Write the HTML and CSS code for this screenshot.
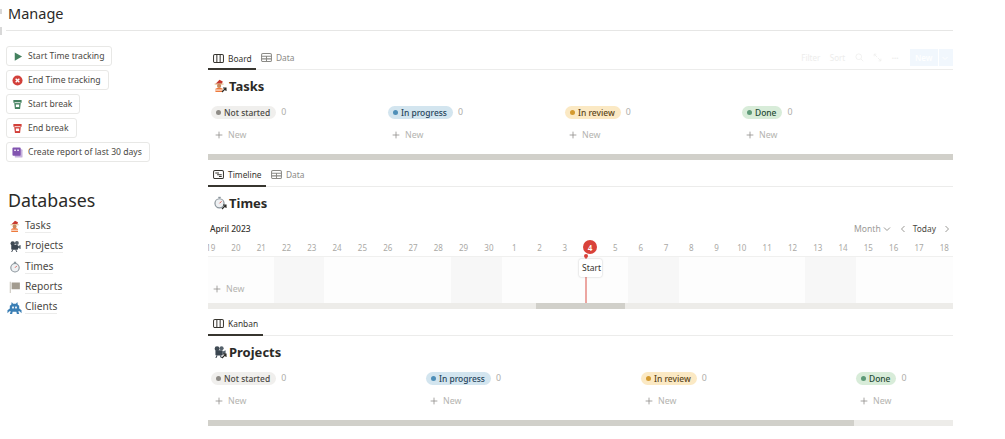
FILE: index.html
```html
<!DOCTYPE html>
<html lang="en">
<head>
    <meta charset="UTF-8">
    <meta name="viewport" content="width=device-width, initial-scale=1.0">
    <title>Manage</title>
    <link rel="stylesheet" href="styles.css">
</head>
<body>
    <!-- shared icons -->
    <svg class="defs" width="0" height="0">
        <symbol id="i-tasks" viewBox="0 0 16 16">
            <path d="M3 6 L8 1 L12 3 L11 6 Z" fill="#c8382e"/>
            <rect x="2" y="5.5" width="11" height="1.6" fill="#e8c9a0"/>
            <circle cx="7.5" cy="8.5" r="2.6" fill="#c98a5e"/>
            <path d="M3 16 L3 12 Q7.5 9.5 12 12 L12 16 Z" fill="#ee7a3c"/>
            <rect x="3" y="13" width="9" height="1.2" fill="#fff"/>
        </symbol>
        <symbol id="i-projects" viewBox="0 0 16 16">
            <circle cx="5" cy="4.5" r="3" fill="#3f4a54"/>
            <circle cx="10.5" cy="4" r="2.6" fill="#55616b"/>
            <rect x="3" y="6.5" width="9" height="6.5" rx="1" fill="#3a4550"/>
            <path d="M12 8 L15.5 6.5 L15.5 12 L12 10.5 Z" fill="#55616b"/>
            <path d="M5 13 L3.5 16 M9 13 L10.5 16" stroke="#3a4550" stroke-width="1.3"/>
        </symbol>
        <symbol id="i-times" viewBox="0 0 16 16">
            <rect x="6.5" y="1" width="3" height="1.6" fill="#8a949b"/>
            <circle cx="8" cy="9" r="5.6" fill="#eef1f3" stroke="#8a949b" stroke-width="1.5"/>
            <path d="M8 9 L10.5 6.5" stroke="#d8574c" stroke-width="1.2"/>
        </symbol>
        <symbol id="i-reports" viewBox="0 0 16 16">
            <rect x="1" y="1" width="1.4" height="15" fill="#c9c5bc"/>
            <rect x="3.5" y="2" width="11" height="9" fill="#a39c90"/>
        </symbol>
        <symbol id="i-clients" viewBox="0 0 16 16">
            <path d="M5 2 L6.5 4 L9.5 4 L11 2 L11.5 5 L13 6 L13 9 L15.5 11 L15.5 14 L13.5 12 L12 12 L13 15 L10.5 15 L10 12.5 L6 12.5 L5.5 15 L3 15 L4 12 L2.5 12 L.5 14 L.5 11 L3 9 L3 6 L4.5 5 Z" fill="#3b7fb5"/>
            <rect x="5.5" y="7" width="1.8" height="2" fill="#fff"/>
            <rect x="8.7" y="7" width="1.8" height="2" fill="#fff"/>
        </symbol>
        <symbol id="i-board" viewBox="0 0 12 12">
            <rect x=".6" y="1.6" width="10.8" height="8.8" rx="1.5" fill="none" stroke="currentColor" stroke-width="1.1"/>
            <path d="M4.2 1.6 V10.4 M7.8 1.6 V10.4" stroke="currentColor" stroke-width="1.1"/>
        </symbol>
        <symbol id="i-table" viewBox="0 0 12 12">
            <rect x=".6" y="1.6" width="10.8" height="8.8" rx="1.5" fill="none" stroke="currentColor" stroke-width="1.1"/>
            <path d="M.6 4.6 H11.4 M.6 7.5 H11.4 M6 4.6 V10.4" stroke="currentColor" stroke-width="1.1"/>
        </symbol>
        <symbol id="i-timeline" viewBox="0 0 12 12">
            <rect x=".6" y="1.6" width="10.8" height="8.8" rx="1.5" fill="none" stroke="currentColor" stroke-width="1.1"/>
            <path d="M2.5 4.3 H6.5 M4.5 6.2 H9.5 M6.5 8.1 H9.5" stroke="currentColor" stroke-width="1.1"/>
        </symbol>
        <symbol id="i-plus" viewBox="0 0 10 10">
            <path d="M5 .8 V9.2 M.8 5 H9.2" stroke="currentColor" stroke-width="1"/>
        </symbol>
        <symbol id="i-cup" viewBox="0 0 12 12">
            <path d="M1.5 1 H10.5 V4 H9.6 L8.8 11 H3.2 L2.4 4 H1.5 Z" fill="currentColor"/>
            <rect x="2.8" y="3.6" width="6.4" height=".9" fill="#fff"/>
            <rect x="4.2" y="6" width="3.6" height="2.8" fill="#fff"/>
        </symbol>
        <symbol id="i-arrow" viewBox="0 0 6 6">
            <path d="M1 5 L5 1 M2 1 H5 V4" fill="none" stroke="#2b2a27" stroke-width="1.1"/>
        </symbol>
    </svg>

    <div class="page">
        <span class="grip grip-top"></span>
        <span class="grip grip-bottom"></span>
        <h1 class="page-title">Manage</h1>

        <div class="columns">
            <aside class="sidebar">
                <div class="actions">
                    <button class="action">
                        <svg class="action-icon" viewBox="0 0 12 12"><path d="M3 1.5 L11 6 L3 10.5 Z" fill="#44815f"/></svg>
                        Start Time tracking
                    </button>
                    <button class="action">
                        <svg class="action-icon" viewBox="0 0 12 12"><circle cx="6" cy="6" r="5.5" fill="#d2403a"/><path d="M4 4 L8 8 M8 4 L4 8" stroke="#fff" stroke-width="1.5"/></svg>
                        End Time tracking
                    </button>
                    <button class="action">
                        <svg class="action-icon icon-green"><use href="#i-cup"/></svg>
                        Start break
                    </button>
                    <button class="action">
                        <svg class="action-icon icon-red"><use href="#i-cup"/></svg>
                        End break
                    </button>
                    <button class="action">
                        <svg class="action-icon" viewBox="0 0 12 12"><rect x="3" y="2.5" width="8.5" height="9" rx="1" fill="#c7b3de"/><rect x=".5" y=".5" width="9" height="9" rx="1" fill="#8254b0"/><rect x="2.5" y="2.8" width="1.6" height="1.6" fill="#fff"/><rect x="5.8" y="2.8" width="1.6" height="1.6" fill="#fff"/></svg>
                        Create report of last 30 days
                    </button>
                </div>

                <h2 class="db-title">Databases</h2>
                <ul class="db-list">
                    <li><svg class="db-icon"><use href="#i-tasks"/></svg><span>Tasks</span></li>
                    <li><svg class="db-icon"><use href="#i-projects"/></svg><span>Projects</span></li>
                    <li><svg class="db-icon"><use href="#i-times"/></svg><span>Times</span></li>
                    <li><svg class="db-icon"><use href="#i-reports"/></svg><span>Reports</span></li>
                    <li><svg class="db-icon db-icon-wide"><use href="#i-clients"/></svg><span>Clients</span></li>
                </ul>
            </aside>

            <main class="main">
                <!-- Tasks board -->
                <section class="view view-tasks">
                    <div class="tabs">
                        <div class="tab active board-tab"><svg class="tab-icon"><use href="#i-board"/></svg>Board</div>
                        <div class="tab"><svg class="tab-icon"><use href="#i-table"/></svg>Data</div>
                        <div class="toolbar">
                            <span>Filter</span>
                            <span>Sort</span>
                            <svg class="tool-icon" viewBox="0 0 12 12"><circle cx="5" cy="5" r="3.8" fill="none" stroke="currentColor"/><path d="M8 8 L11 11" stroke="currentColor"/></svg>
                            <svg class="tool-icon" viewBox="0 0 12 12"><path d="M1.5 1.5 L5.5 5.5 M1.5 1.5 H4.5 M1.5 1.5 V4.5 M6.5 6.5 L10.5 10.5 M10.5 10.5 H7.5 M10.5 10.5 V7.5" fill="none" stroke="currentColor"/></svg>
                            <span class="dots">&middot;&middot;&middot;</span>
                            <div class="new-btn">New<i class="new-divider"></i><svg class="new-chev" viewBox="0 0 8 8"><path d="M1.5 3 L4 5.5 L6.5 3" fill="none" stroke="white"/></svg></div>
                        </div>
                    </div>
                    <h3 class="view-title"><span class="linked"><svg class="title-icon"><use href="#i-tasks"/></svg><svg class="link-arrow"><use href="#i-arrow"/></svg></span>Tasks</h3>
                    <div class="board">
                        <div class="board-col">
                            <div class="col-head"><span class="pill grey">Not started</span><span class="count">0</span></div>
                            <div class="add"><svg class="plus"><use href="#i-plus"/></svg>New</div>
                        </div>
                        <div class="board-col">
                            <div class="col-head"><span class="pill blue">In progress</span><span class="count">0</span></div>
                            <div class="add"><svg class="plus"><use href="#i-plus"/></svg>New</div>
                        </div>
                        <div class="board-col">
                            <div class="col-head"><span class="pill yellow">In review</span><span class="count">0</span></div>
                            <div class="add"><svg class="plus"><use href="#i-plus"/></svg>New</div>
                        </div>
                        <div class="board-col">
                            <div class="col-head"><span class="pill green">Done</span><span class="count">0</span></div>
                            <div class="add"><svg class="plus"><use href="#i-plus"/></svg>New</div>
                        </div>
                    </div>
                    <div class="scrollbar"><div class="thumb thumb-full"></div></div>
                </section>

                <!-- Times timeline -->
                <section class="view view-times">
                    <div class="tabs">
                        <div class="tab active timeline-tab"><svg class="tab-icon"><use href="#i-timeline"/></svg>Timeline</div>
                        <div class="tab"><svg class="tab-icon"><use href="#i-table"/></svg>Data</div>
                    </div>
                    <h3 class="view-title"><span class="linked"><svg class="title-icon"><use href="#i-times"/></svg><svg class="link-arrow"><use href="#i-arrow"/></svg></span>Times</h3>
                    <div class="month-row">
                        <span class="month">April 2023</span>
                        <div class="month-tools">
                            <span class="month-select">Month <svg class="chev" viewBox="0 0 8 8"><path d="M1 2.5 L4 5.5 L7 2.5" fill="none" stroke="currentColor"/></svg></span>
                            <svg class="chev nav-prev" viewBox="0 0 8 8"><path d="M5.5 1 L2.5 4 L5.5 7" fill="none" stroke="currentColor"/></svg>
                            <span class="today">Today</span>
                            <svg class="chev nav-next" viewBox="0 0 8 8"><path d="M2.5 1 L5.5 4 L2.5 7" fill="none" stroke="currentColor"/></svg>
                        </div>
                    </div>
                    <div class="timeline">
                        <div class="days">
                            <span>19</span><span>20</span><span>21</span><span>22</span><span>23</span><span>24</span><span>25</span><span>26</span><span>27</span><span>28</span><span>29</span><span>30</span><span>1</span><span>2</span><span>3</span><span class="today-num">4</span><span>5</span><span>6</span><span>7</span><span>8</span><span>9</span><span>10</span><span>11</span><span>12</span><span>13</span><span>14</span><span>15</span><span>16</span><span>17</span><span>18</span>
                        </div>
                        <div class="grid">
                            <i></i><i></i><i></i><i class="weekend"></i><i class="weekend"></i><i></i><i></i><i></i><i></i><i></i><i class="weekend"></i><i class="weekend"></i><i></i><i></i><i></i><i></i><i></i><i class="weekend"></i><i class="weekend"></i><i></i><i></i><i></i><i></i><i></i><i class="weekend"></i><i class="weekend"></i><i></i><i></i><i></i><i></i>
                        </div>
                        <div class="add timeline-add"><svg class="plus"><use href="#i-plus"/></svg>New</div>
                        <div class="today-line"></div>
                        <div class="today-dot"></div>
                        <div class="event">Start</div>
                    </div>
                    <div class="scrollbar"><div class="thumb thumb-time"></div></div>
                </section>

                <!-- Projects kanban -->
                <section class="view view-projects">
                    <div class="tabs">
                        <div class="tab active kanban-tab"><svg class="tab-icon"><use href="#i-board"/></svg>Kanban</div>
                    </div>
                    <h3 class="view-title"><span class="linked"><svg class="title-icon"><use href="#i-projects"/></svg><svg class="link-arrow"><use href="#i-arrow"/></svg></span>Projects</h3>
                    <div class="board board-wide">
                        <div class="board-col">
                            <div class="col-head"><span class="pill grey">Not started</span><span class="count">0</span></div>
                            <div class="add"><svg class="plus"><use href="#i-plus"/></svg>New</div>
                        </div>
                        <div class="board-col">
                            <div class="col-head"><span class="pill blue">In progress</span><span class="count">0</span></div>
                            <div class="add"><svg class="plus"><use href="#i-plus"/></svg>New</div>
                        </div>
                        <div class="board-col">
                            <div class="col-head"><span class="pill yellow">In review</span><span class="count">0</span></div>
                            <div class="add"><svg class="plus"><use href="#i-plus"/></svg>New</div>
                        </div>
                        <div class="board-col">
                            <div class="col-head"><span class="pill green">Done</span><span class="count">0</span></div>
                            <div class="add"><svg class="plus"><use href="#i-plus"/></svg>New</div>
                        </div>
                    </div>
                    <div class="scrollbar"><div class="thumb thumb-kanban"></div></div>
                </section>
            </main>
        </div>
    </div>
</body>
</html>
```

FILE: styles.css
```css
/* Reset */
* {
    margin: 0;
    padding: 0;
    box-sizing: border-box;
}

body {
    background-color: white;
    color: #37352f;
    font-family: "Noto Sans", "Open Sans", sans-serif;
    font-size: 9.5px;
    overflow: hidden;
}

.defs {
    position: absolute;
}

.page {
    position: relative;
    width: 953px;
    height: 439px;
}

/* drag handles on the left edge */
.grip {
    position: absolute;
    left: 0;
    width: 2px;
    background-color: #d8d8d8;
}

.grip-top {
    top: 9px;
    height: 5px;
}

.grip-bottom {
    top: 27px;
    height: 8px;
}

.page-title {
    height: 31px;
    margin-left: 6px;
    padding-left: 2px;
    border-bottom: 1px solid #e6e6e5;
    font-size: 14.5px;
    font-weight: 400;
    line-height: 27px;
    color: #2b2a27;
}

.columns {
    display: flex;
}

/* Sidebar */
.sidebar {
    width: 208px;
    flex-shrink: 0;
    padding-left: 6px;
}

.actions {
    display: flex;
    flex-direction: column;
    align-items: flex-start;
    gap: 4px;
    margin-top: 15px;
}

.action {
    display: flex;
    align-items: center;
    height: 20px;
    padding: 0 7px 0 5px;
    gap: 5px;
    background-color: white;
    border: 1px solid #e8e8e6;
    border-radius: 3px;
    font-family: inherit;
    font-size: 8.6px;
    color: #4a4843;
}

.action-icon {
    width: 11px;
    height: 11px;
    flex-shrink: 0;
}

.icon-green {
    color: #44815f;
}

.icon-red {
    color: #d2403a;
}

.db-title {
    margin-top: 25px;
    padding-left: 2px;
    font-size: 17.8px;
    font-weight: 400;
    line-height: 26px;
    color: #2b2a27;
}

.db-list {
    list-style: none;
    margin-top: 3px;
}

.db-list li {
    display: flex;
    align-items: center;
    gap: 4px;
    height: 20.25px;
    padding-left: 3px;
    font-size: 10.2px;
    color: #4a4843;
}

.db-list span {
    border-bottom: 1px solid #ececeb;
    line-height: 13px;
}

.db-icon {
    width: 12px;
    height: 12px;
}

.db-icon-wide {
    width: 15px;
    height: 15px;
    margin: 0 -1px 0 -2px;
}

/* Views */
.main {
    flex: 1;
    min-width: 0;
    margin-top: 15px;
}

.view {
    position: relative;
    overflow: hidden;
    margin-bottom: 3px;
}

.tabs {
    display: flex;
    height: 24px;
    border-bottom: 1px solid #ececeb;
}

.tab {
    display: flex;
    align-items: center;
    gap: 4px;
    padding: 0 5px;
    font-size: 8.4px;
    color: #8b8a86;
}

.tab.active {
    color: #37352f;
    box-shadow: inset 0 -2px 0 #37352f;
    height: 24px;
}

.board-tab {
    width: 48px;
}

.timeline-tab {
    width: 58px;
    padding-bottom: 2px;
}

.kanban-tab {
    width: 55px;
    padding-bottom: 2px;
}

.tab-icon {
    width: 11px;
    height: 11px;
    flex-shrink: 0;
}

.toolbar {
    display: flex;
    align-items: center;
    gap: 9.5px;
    margin-left: auto;
    font-size: 8px;
    color: #ededec;
}

.tool-icon {
    width: 9px;
    height: 9px;
}

.dots {
    font-weight: 700;
}

.new-btn {
    display: flex;
    align-items: center;
    width: 43px;
    height: 17px;
    margin-left: 2px;
    padding-left: 5px;
    background-color: #f1f7fd;
    color: white;
    font-weight: 600;
}

.new-divider {
    width: 1px;
    height: 17px;
    margin-left: 5px;
    background-color: white;
}

.new-chev {
    width: 8px;
    height: 8px;
    margin-left: 2px;
}

.view-title {
    display: flex;
    align-items: center;
    height: 32px;
    padding: 0 0 1px 5px;
    font-size: 13px;
    font-weight: 700;
    color: #2b2a27;
}

.linked {
    position: relative;
    display: block;
    width: 14px;
    height: 14px;
    margin-right: 2px;
}

.title-icon {
    display: block;
    width: 13px;
    height: 13px;
}

.link-arrow {
    position: absolute;
    right: 0;
    bottom: 0;
    width: 6px;
    height: 6px;
}

/* Boards */
.board {
    display: grid;
    grid-template-columns: repeat(4, 177px);
    padding-left: 3px;
}

.board-wide {
    grid-template-columns: repeat(4, 215px);
}

.col-head {
    display: flex;
    align-items: center;
    gap: 5px;
    height: 20px;
}

.pill {
    display: flex;
    align-items: center;
    gap: 3px;
    height: 13px;
    padding: 0 6px 0 5px;
    border-radius: 7px;
    font-size: 8.45px;
    font-weight: 500;
}

.pill::before {
    content: "";
    width: 5px;
    height: 5px;
    border-radius: 50%;
}

.grey {
    background-color: #f0efed;
    color: #4a4843;
}

.grey::before {
    background-color: #8e8b86;
}

.blue {
    background-color: #d3e5ef;
    color: #27455c;
}

.blue::before {
    background-color: #4f8fb8;
}

.yellow {
    background-color: #fbe9c4;
    color: #5a4518;
}

.yellow::before {
    background-color: #d49a2f;
}

.green {
    background-color: #d8ecd9;
    color: #244a34;
}

.green::before {
    background-color: #5e9a78;
}

.count {
    font-size: 8.8px;
    color: #aeada9;
}

.add {
    display: flex;
    align-items: center;
    gap: 5px;
    height: 25px;
    padding-left: 4px;
    font-size: 8.8px;
    color: #b4b3af;
}

.plus {
    width: 8px;
    height: 8px;
    color: #8f8e8a;
}

/* Scrollbars */
.scrollbar {
    height: 6px;
    background-color: #edece9;
}

.view-tasks .scrollbar,
.view-projects .scrollbar {
    margin-top: 7px;
}

.thumb {
    height: 6px;
    background-color: #d1d0ca;
}

.thumb-full {
    width: 100%;
}

.thumb-time {
    width: 89px;
    margin-left: 328px;
}

.thumb-kanban {
    width: 646px;
}

/* Timeline */
.month-row {
    display: flex;
    align-items: center;
    justify-content: space-between;
    height: 19px;
    padding: 0 2px;
}

.month {
    font-size: 8.5px;
    font-weight: 500;
    color: #37352f;
}

.month-tools {
    display: flex;
    align-items: center;
    font-size: 8.6px;
    color: #9b9a96;
}

.month-select {
    display: flex;
    align-items: center;
    gap: 2px;
}

.chev {
    width: 8px;
    height: 8px;
}

.nav-prev {
    margin-left: 8px;
}

.nav-next {
    margin-left: 7px;
}

.today {
    margin-left: 6px;
    font-size: 8.4px;
    color: #4a4843;
}

.timeline {
    position: relative;
    overflow: hidden;
    height: 65px;
}

.days,
.grid {
    display: grid;
    grid-template-columns: repeat(30, 25.3px);
    margin-left: -10px;
}

.days {
    height: 19px;
    align-items: center;
    justify-items: center;
    font-size: 8px;
    color: #aaa9a5;
    border-bottom: 1px solid #f0f0ef;
}

.today-num {
    display: flex;
    align-items: center;
    justify-content: center;
    width: 14px;
    height: 14px;
    border-radius: 50%;
    background-color: #d9423a;
    color: white;
    font-weight: 600;
}

.grid {
    height: 46px;
}

.grid i {
    background-color: #fdfdfd;
}

.grid .weekend {
    background-color: #f7f7f7;
}

.timeline-add {
    position: absolute;
    left: 1px;
    bottom: 2px;
    height: 24px;
}

.today-line {
    position: absolute;
    left: 377px;
    top: 19px;
    bottom: 0;
    width: 1.5px;
    background-color: #eca6a1;
}

.today-dot {
    position: absolute;
    left: 376px;
    top: 15.5px;
    width: 4px;
    height: 4px;
    border-radius: 50%;
    background-color: #d9423a;
}

.event {
    position: absolute;
    left: 371px;
    top: 21px;
    width: 23px;
    height: 18px;
    padding-left: 3px;
    background-color: white;
    border-radius: 2px;
    box-shadow: 0 0 2px rgba(0, 0, 0, 0.25);
    font-size: 8.5px;
    line-height: 17px;
    white-space: nowrap;
}
```
